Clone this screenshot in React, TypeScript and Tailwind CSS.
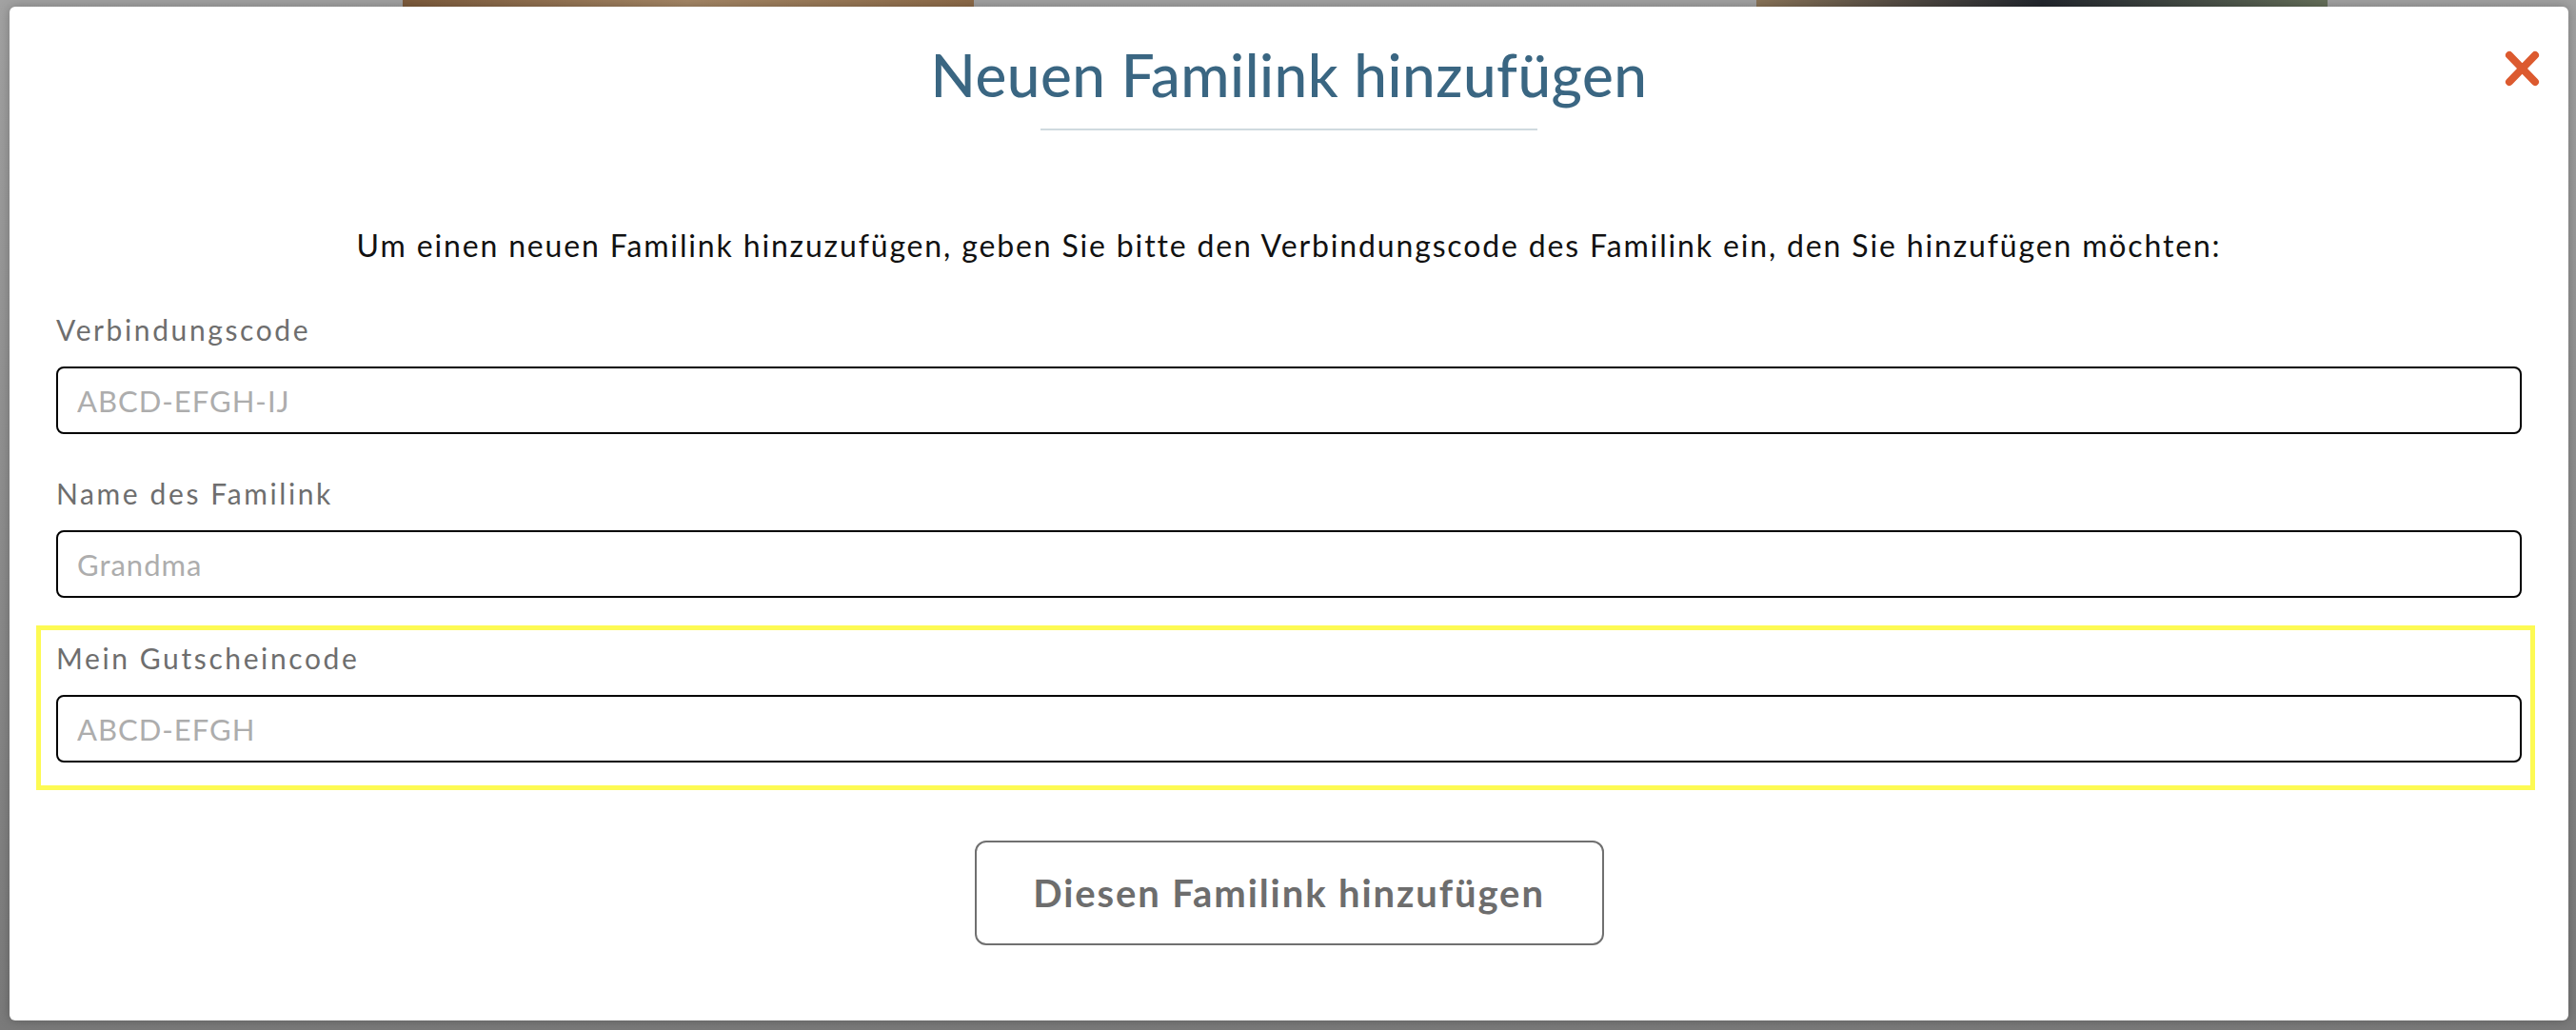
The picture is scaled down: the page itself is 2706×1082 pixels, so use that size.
import type { ReactNode } from 'react';

function Field({ label, placeholder, gap = 'mt-[46px]' }: { label: string; placeholder: string; gap?: string }) {
  return (
    <div className={gap}>
      <label className="block text-[30px] leading-[30px] tracking-[2.6px] text-[#6e6e6e]">{label}</label>
      <input
        type="text"
        placeholder={placeholder}
        className="mt-[24px] block h-[71px] w-full rounded-[8px] border-2 border-black bg-white pl-[20px] text-[31px] tracking-[1px] text-black outline-none placeholder:text-[#adadad]"
      />
    </div>
  );
}

function Highlight({ children }: { children: ReactNode }) {
  return (
    <div className="mt-[29px] ml-[-21px] mr-[-14px] border-[5px] border-[#fdfa53] pt-[14px] pb-[24px] pl-[16px] pr-[9px]">
      {children}
    </div>
  );
}

export default function App() {
  return (
    <div className="flex h-[1082px] w-full flex-col overflow-hidden bg-gradient-to-b from-[#a2a2a2] to-[#7a7a7a] font-[Lato,sans-serif]">
      {/* bits of the page behind the modal */}
      <div className="flex h-[7px] shrink-0">
        <div className="ml-[423px] w-[600px] bg-gradient-to-r from-[#7d5b3c] via-[#a58766] to-[#8c6a48]" />
        <div className="ml-[822px] w-[600px] bg-gradient-to-r from-[#8a7458] via-[#23272e] to-[#66705a]" />
      </div>

      {/* Modal */}
      <div className="relative ml-[10px] mr-[8px] h-[1065px] shrink-0 rounded-[6px] bg-white px-[49px] shadow-[0_0_12px_rgba(0,0,0,0.25)]">
        <button className="absolute top-[46px] right-[30px] h-[38px] w-[37px]" aria-label="Schließen">
          <svg viewBox="0 0 37 38" className="h-full w-full">
            <path d="M5 5 L32 33 M32 5 L5 33" stroke="#dc5a2f" strokeWidth="8" strokeLinecap="round" fill="none" />
          </svg>
        </button>

        <div className="flex flex-col items-center pt-[40px]">
          <h1 className="text-[62px] leading-[62px] font-medium tracking-[0.5px] text-[#3a6682]">Neuen Familink hinzufügen</h1>
          <div className="mt-[26px] h-[2px] w-[522px] bg-[#cfdadf]" />
        </div>

        <p className="mt-[105px] text-center text-[32px] leading-[32px] tracking-[1.85px] text-[#111]">
          Um einen neuen Familink hinzuzufügen, geben Sie bitte den Verbindungscode des Familink ein, den Sie hinzufügen möchten:
        </p>

        <Field label="Verbindungscode" placeholder="ABCD-EFGH-IJ" gap="mt-[57px]" />
        <Field label="Name des Familink" placeholder="Grandma" gap="mt-[47px]" />

        <Highlight>
          <Field label="Mein Gutscheincode" placeholder="ABCD-EFGH" gap="" />
        </Highlight>

        <div className="mt-[53px] flex justify-center">
          <button className="h-[110px] w-[661px] rounded-[12px] border-2 border-[#707070] bg-white text-[40px] font-bold tracking-[1.9px] text-[#6d6d6d]">
            Diesen Familink hinzufügen
          </button>
        </div>
      </div>
    </div>
  );
}
